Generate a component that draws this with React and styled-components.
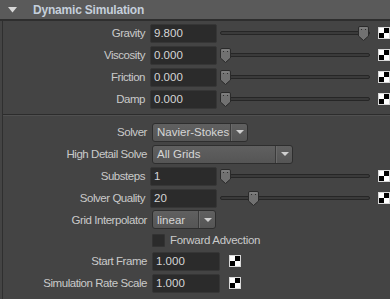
import React from 'react'
import styled, { createGlobalStyle } from 'styled-components'

const Global = createGlobalStyle`
  html, body {
    margin: 0;
    padding: 0;
    background: #444444;
    overflow: hidden;
  }
  body {
    font-family: 'Liberation Sans', Arial, sans-serif;
    font-size: 11px;
    color: #c8c8c8;
  }
`

const Page = styled.div`
  width: 390px;
  height: 299px;
  overflow: hidden;
  background: #444444;
`

const Header = styled.div`
  height: 19px;
  display: flex;
  align-items: center;
  background: #5a5a5a;
  border-bottom: 2px solid #2e2e2e;
  padding-left: 8px;
  gap: 16px;
  .title {
    font-size: 12px;
    font-weight: bold;
    letter-spacing: -0.2px;
    color: #c5cfdb;
    margin-top: 1px;
  }
`

const Panel = styled.div`
  margin-left: 2px;
  border-left: 1px solid #2f2f2f;
  padding-top: 1px;
`

const Row = styled.div`
  height: ${p => p.$h || 22}px;
  display: flex;
  align-items: center;
`

const Label = styled.div`
  width: 147px;
  margin-left: -3px;
  padding-right: 5px;
  text-align: right;
  font-size: 11.5px;
  letter-spacing: -0.45px;
  white-space: nowrap;
  color: #cacaca;
`

const Field = styled.div`
  box-sizing: border-box;
  width: 68px;
  height: 19px;
  background: #2b2b2b;
  border: 1px solid #363636;
  border-radius: 2px;
  padding-left: 3px;
  display: flex;
  align-items: center;
  color: #d6d6d6;
  font-size: 11.5px;
`

const Track = styled.div`
  position: relative;
  width: 152px;
  height: 19px;
  margin-left: 3px;
  display: flex;
  align-items: center;
  &::before {
    content: '';
    box-sizing: border-box;
    width: 100%;
    height: 4px;
    border: 1px solid #262626;
    background: #3a3a3a;
    border-radius: 2px;
  }
`

const Handle = styled.svg`
  position: absolute;
  top: 2px;
  width: 11px;
  height: 15px;
`

const Checker = styled.div`
  box-sizing: border-box;
  width: 12px;
  height: 12px;
  margin-left: ${p => p.$gap}px;
  border: 1px solid #d8d8d8;
  background:
    linear-gradient(#000, #000) right top / 50% 50% no-repeat,
    linear-gradient(#000, #000) left bottom / 50% 50% no-repeat,
    #fff;
`

const Select = styled.div`
  box-sizing: border-box;
  width: ${p => p.$w}px;
  height: 19px;
  display: flex;
  align-items: stretch;
  background: linear-gradient(#606060, #555555);
  border: 1px solid #2e2e2e;
  border-radius: 3px;
  color: #d6d6d6;
  font-size: 11.5px;
  .text {
    flex: 1;
    display: flex;
    align-items: center;
    padding-left: 4px;
    border-right: 1px solid #3a3a3a;
  }
  .arrow {
    width: 15px;
    display: flex;
    align-items: center;
    justify-content: center;
    border-left: 1px solid #6a6a6a;
  }
  .arrow::after {
    content: '';
    border-left: 4px solid transparent;
    border-right: 4px solid transparent;
    border-top: 4px solid #cfcfcf;
  }
`

const Separator = styled.div`
  margin: 4px 0 5px 0;
  height: 0;
  border-top: 1px solid #2c2c2c;
  border-bottom: 1px solid #505050;
`

const Box = styled.div`
  box-sizing: border-box;
  width: 13px;
  height: 13px;
  background: #2b2b2b;
  border: 1px solid #333;
  border-radius: 1px;
`

const CheckLabel = styled.span`
  margin-left: 5px;
  letter-spacing: -0.3px;
  color: #cacaca;
  font-size: 11.5px;
`

const Triangle = () => (
  <svg width="9" height="6" viewBox="0 0 9 6">
    <path d="M0 0 H9 L4.5 5.5 Z" fill="#d8d8d8" />
  </svg>
)

const Slider = ({ frac }) => (
  <Track>
    <Handle viewBox="0 0 11 15" style={{ left: `${frac * 141}px` }}>
      <path d="M0.5 2 Q0.5 0.5 2 0.5 H9 Q10.5 0.5 10.5 2 V10 L5.5 14.5 L0.5 10 Z" fill="#717171" stroke="#2a2a2a" />
      <path d="M1.5 2 H9.5" stroke="#8a8a8a" />
      <rect x="3" y="3" width="1" height="1" fill="#2f2f2f" />
      <rect x="7" y="3" width="1" height="1" fill="#2f2f2f" />
    </Handle>
  </Track>
)

const NumRow = ({ label, value, frac }) => (
  <Row>
    <Label>{label}</Label>
    <Field>{value}</Field>
    {frac !== undefined ? <Slider frac={frac} /> : null}
    <Checker $gap={frac !== undefined ? 8 : 9} />
  </Row>
)

const SelectRow = ({ label, value, w, h }) => (
  <Row $h={h}>
    <Label>{label}</Label>
    <Select $w={w}>
      <span className="text">{value}</span>
      <span className="arrow" />
    </Select>
  </Row>
)

export default function App() {
  return (
    <Page>
      <Global />
      <Header>
        <Triangle />
        <span className="title">Dynamic Simulation</span>
      </Header>
      <Panel>
        <NumRow label="Gravity" value="9.800" frac={0.98} />
        <NumRow label="Viscosity" value="0.000" frac={0} />
        <NumRow label="Friction" value="0.000" frac={0} />
        <NumRow label="Damp" value="0.000" frac={0} />
        <Separator />
        <SelectRow label="Solver" value="Navier-Stokes" w={96} />
        <SelectRow label="High Detail Solve" value="All Grids" w={141} />
        <NumRow label="Substeps" value="1" frac={0} />
        <NumRow label="Solver Quality" value="20" frac={0.2} />
        <SelectRow label="Grid Interpolator" value="linear" w={64} h={21} />
        <Row $h={20}>
          <Label />
          <Box />
          <CheckLabel>Forward Advection</CheckLabel>
        </Row>
        <NumRow label="Start Frame" value="1.000" />
        <NumRow label="Simulation Rate Scale" value="1.000" />
        <Row>
          <Label />
          <Box />
        </Row>
      </Panel>
    </Page>
  )
}
